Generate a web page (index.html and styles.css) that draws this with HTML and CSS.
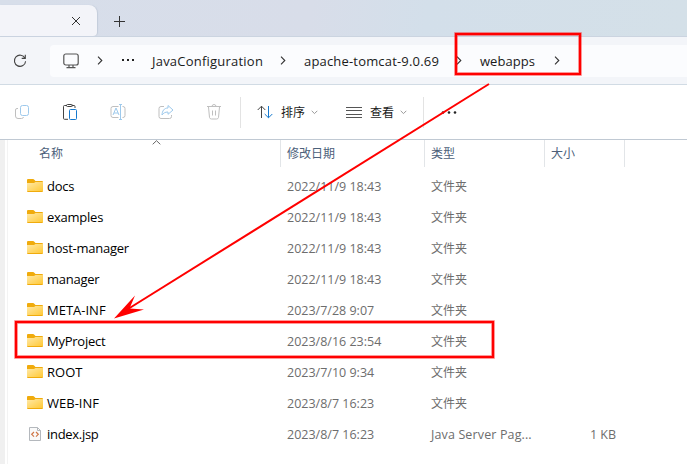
FILE: index.html
```html
<!DOCTYPE html>
<html lang="zh-CN">
<head>
<meta charset="utf-8">
<title>webapps</title>
<link rel="stylesheet" href="styles.css">
</head>
<body>
<div class="window">
  <header class="tabs">
    <div class="tab"><svg class="close" width="10" height="10" viewBox="0 0 10 10"><path d="M1 1l8 8M9 1L1 9"/></svg></div>
    <svg class="plus" width="11" height="11" viewBox="0 0 11 11"><path d="M5.5 0v11M0 5.5h11"/></svg>
  </header>
  <nav class="nav">
    <svg class="refresh" width="14" height="14" viewBox="0 0 14 14"><path d="M12 4.2A5.6 5.6 0 1 0 12.6 7.2M12.3.8v3.6H8.7"/></svg>
    <div class="address">
      <svg class="pc" width="16" height="16" viewBox="0 0 16 16"><rect x=".8" y="1" width="14.4" height="11" rx="2"/><path d="M6 12v2.6M10 12v2.6M3.5 14.6h9"/></svg>
      <svg class="chev c1" width="6" height="9" viewBox="0 0 6 9"><path d="M1 .7l3.8 3.8L1 8.3"/></svg>
      <svg class="dots" width="12" height="2" viewBox="0 0 12 2"><path d="M0 0h2v2H0zM5 0h2v2H5zM10 0h2v2h-2z"/></svg>
      <span class="crumb java">JavaConfiguration</span>
      <svg class="chev c2" width="6" height="9" viewBox="0 0 6 9"><path d="M1 .7l3.8 3.8L1 8.3"/></svg>
      <span class="crumb tomcat">apache-tomcat-9.0.69</span>
      <svg class="chev c3" width="6" height="9" viewBox="0 0 6 9"><path d="M1 .7l3.8 3.8L1 8.3"/></svg>
      <span class="crumb web">webapps</span>
      <svg class="chev c4" width="6" height="9" viewBox="0 0 6 9"><path d="M1 .7l3.8 3.8L1 8.3"/></svg>
    </div>
  </nav>
  <div class="toolbar">
    <svg class="tool" width="16" height="18" viewBox="0 0 16 18"><rect class="pale" x="6.500" y="2.500" width="8" height="10" rx="2"/><path class="gray" d="M4 5.500H3a1.500 1.500 0 0 0-1.500 1.500v6a2.500 2.500 0 0 0 2.500 2.500h3.500a2 2 0 0 0 2-1.500"/></svg>
    <svg class="tool" width="16" height="18" viewBox="0 0 16 18"><path class="dark" d="M5 2.500H2.500a1 1 0 0 0-1 1v11.800a1 1 0 0 0 1 1H6M9.500 2.500H12a1 1 0 0 1 1 1V5"/><rect class="dark" x="4.500" y="1.500" width="6" height="2" rx="1"/><rect class="blue" x="7.500" y="6.500" width="7" height="10" rx="1"/></svg>
    <svg class="tool" width="16" height="18" viewBox="0 0 16 18"><path class="gray" d="M8.500 3.500H3a2 2 0 0 0-2 2v7a2 2 0 0 0 2 2h5.500M12.500 3.500h.5a2 2 0 0 1 2 2v7a2 2 0 0 1-2 2h-.5"/><path class="pale" d="M3 12l3-7 3 7M4 10h4M10.500 1.500v15M9 1.500h3M9 16.500h3"/></svg>
    <svg class="tool" width="16" height="18" viewBox="0 0 16 18"><path class="gray" d="M6 3.500H3a2 2 0 0 0-2 2v8a2 2 0 0 0 2 2h8.500a2 2 0 0 0 2-2V12"/><path class="pale" d="M10 2.500l5 4.500-5 4.300V9c-3 0-4.500 1-6 3 .2-4 2-7 6-7z"/></svg>
    <svg class="tool" width="16" height="18" viewBox="0 0 16 18"><path class="gray" d="M1 3.500h14M6 3.500a2 2 0 0 1 4 0M2.500 4l1 10.500a2 2 0 0 0 2 1.500h5a2 2 0 0 0 2-1.500l1-10.500M6.500 7.500v5M9.500 7.500v5"/></svg>
    <i class="divider d1"></i>
    <svg class="sort" width="16" height="14" viewBox="0 0 16 14"><path class="dark" d="M4.500 13V1.300M.7 5l3.800-3.800L8.300 5"/><path class="blue" d="M11.500 1v11.700M7.700 9l3.800 3.800L15.300 9"/></svg>
    <span class="label">排序</span>
    <svg class="down" width="7" height="5" viewBox="0 0 7 5"><path d="M.7.800l2.800 2.800L6.300.800"/></svg>
    <svg class="view" width="16" height="11" viewBox="0 0 16 11"><path d="M0 .5h16M0 3.500h16M0 7.500h16M0 10.500h16"/></svg>
    <span class="label">查看</span>
    <svg class="down" width="7" height="5" viewBox="0 0 7 5"><path d="M.7.800l2.800 2.800L6.300.800"/></svg>
    <i class="divider d2"></i>
    <svg class="more" width="16" height="3" viewBox="0 0 16 3"><circle cx="2" cy="1.500" r="1.300"/><circle cx="8" cy="1.500" r="1.300"/><circle cx="14" cy="1.500" r="1.300"/></svg>
  </div>
  <main class="content">
    <div class="gutter"></div>
    <div class="list">
      <div class="head">
        <div class="h name">名称<svg class="up" width="9" height="5" viewBox="0 0 9 5"><path d="M.7 4.300L4.500.700l3.800 3.600"/></svg></div>
        <div class="h">修改日期</div><div class="h">类型</div><div class="h">大小</div>
      </div>
      <svg class="defs" width="0" height="0"><defs>
        <linearGradient id="g" x1="0" y1="0" x2="1" y2="1"><stop offset="0" stop-color="#ffe9a8"/><stop offset="1" stop-color="#ffc937"/></linearGradient>
        <symbol id="folder" viewBox="0 0 16 13"><path style="fill:#f0ab0c" d="M0 1Q0 0 1 0h5q.8 0 1.300.7L8.500 2H15q1 0 1 1v9q0 1-1 1H1q-1 0-1-1z"/><path style="fill:url(#g)" d="M0 4h7l1.500-1H16v8.500q0 .5-.5.500H.5q-.5 0-.5-.5z"/></symbol>
      </defs></svg>
      <div class="row"><svg class="icon"><use href="#folder"/></svg><span class="n">docs</span><span>2022/11/9 18:43</span><span>文件夹</span></div>
      <div class="row"><svg class="icon"><use href="#folder"/></svg><span class="n">examples</span><span>2022/11/9 18:43</span><span>文件夹</span></div>
      <div class="row"><svg class="icon"><use href="#folder"/></svg><span class="n">host-manager</span><span>2022/11/9 18:43</span><span>文件夹</span></div>
      <div class="row"><svg class="icon"><use href="#folder"/></svg><span class="n">manager</span><span>2022/11/9 18:43</span><span>文件夹</span></div>
      <div class="row"><svg class="icon"><use href="#folder"/></svg><span class="n caps">META-INF</span><span>2023/7/28 9:07</span><span>文件夹</span></div>
      <div class="row"><svg class="icon"><use href="#folder"/></svg><span class="n">MyProject</span><span>2023/8/16 23:54</span><span>文件夹</span></div>
      <div class="row"><svg class="icon"><use href="#folder"/></svg><span class="n caps">ROOT</span><span>2023/7/10 9:34</span><span>文件夹</span></div>
      <div class="row"><svg class="icon"><use href="#folder"/></svg><span class="n caps">WEB-INF</span><span>2023/8/7 16:23</span><span>文件夹</span></div>
      <div class="row"><svg class="file" width="12" height="14" viewBox="0 0 12 14"><path class="sheet" d="M.5.5h8l3 3v10H.5zM8.500.5v3h3"/><path class="code" d="M5 5L2.700 7.300 5 9.600M7 5l2.300 2.300L7 9.600"/></svg><span class="n jspname">index.jsp</span><span>2023/8/7 16:23</span><span class="jsp">Java Server Pag...</span><span class="size">1 KB</span></div>
    </div>
  </main>
  <svg class="marks" width="687" height="464" viewBox="0 0 687 464">
    <g class="glow"><rect x="456" y="34" width="124" height="40"/><rect x="16" y="322" width="477" height="35"/></g>
    <g class="line"><rect x="456" y="34" width="124" height="40"/><rect x="16" y="322" width="477" height="35"/><path d="M489 84L128 309"/></g>
    <path class="tip" d="M114 318.500L135 295.500l-5.500 13L144 309.500z"/>
  </svg>
</div>
</body>
</html>
```
FILE: styles.css
```css
* { box-sizing: border-box; }
body { margin: 0; font: 13px/20px "Open Sans", "Noto Sans CJK SC", sans-serif; color: #000; }
svg { display: block; flex: none; }
svg path, svg rect { fill: none; }
.window { position: relative; width: 687px; height: 464px; overflow: hidden; background: #fff; }
.tabs { height: 37px; display: flex; align-items: flex-start; border-bottom: 1px solid #cbd4e0; background: linear-gradient(100deg, #d7deea 0%, #d8dde9 45%, #d3dfea 62%, #d4e0e8 100%); }
.tab { width: 97px; height: 31px; margin-top: 5px; border-radius: 0 8px 4px 0; background: #f3f4f9; display: flex; align-items: center; box-shadow: 1px 0 1px #c4cddb; padding-left: 71px; }
.close { stroke: #333; }
.plus { stroke: #333; margin: 16px 0 0 17px; }
.nav { height: 48px; display: flex; align-items: center; background: #f3f5f9; border-bottom: 1px solid #d1dbe4; padding-left: 13px; }
.refresh { stroke: #444; stroke-width: 1.1; }
.address { flex: 1; margin-left: 23px; height: 32px; border-radius: 4px 0 0 4px; background: #fbfcfe; display: flex; align-items: center; padding-left: 13px; }
.pc { stroke: #555; stroke-width: 1.2; }
.chev { stroke: #333; stroke-width: 1.1; }
.c1 { margin-left: 18px; }
.dots { margin-left: 19px; margin-bottom: 2px; }
.dots path, .more circle { fill: #222; }
.crumb { color: #1a1a1a; white-space: nowrap; margin-top: 1px; }
.java { width: 111px; margin-left: 18px; letter-spacing: .22px; }
.c2 { margin-left: 17px; }
.tomcat { width: 136px; margin-left: 18px; letter-spacing: .18px; }
.c3 { margin-left: 16px; }
.web { width: 56px; margin-left: 18px; letter-spacing: .05px; }
.c4 { margin-left: 18px; }
.toolbar { height: 55px; border-bottom: 1px solid #c0c9d3; display: flex; align-items: center; padding-left: 14px; }
.tool { margin-right: 32px; }
.gray { stroke: #bfbfbf; }
.pale { stroke: #9dc9ec; }
.dark { stroke: #444; }
.blue { stroke: #1679ce; }
.divider { width: 1px; height: 31px; background: #e3e3e3; }
.d1 { margin-left: -14px; }
.sort { margin-left: 16px; }
.label { width: 24px; margin: 1px 0 0 8px; font-size: 12px; color: #1a1a1a; }
.down { margin-left: 6px; stroke: #999; }
.view { margin-left: 28px; stroke: #555; }
.d2 { margin-left: 16px; }
.more { margin-left: 17px; }
.content { display: flex; height: 324px; }
.gutter { width: 8px; background: linear-gradient(90deg, #f0f0f0 5px, #fff 5px 7px, #f3f3f3 7px); }
.list { flex: 1; }
.head { display: grid; grid-template-columns: 273px 144px 120px 80px; height: 27px; margin-bottom: 4px; color: #4c607a; font-size: 12px; }
.h { position: relative; border-right: 1px solid #e2e5e8; padding: 4px 0 0 6px; line-height: 19px; }
.name { padding-left: 31px; }
.up { position: absolute; left: 144px; top: 0; stroke: #666; }
.defs { position: absolute; }
.row { height: 31px; display: grid; grid-template-columns: 39px 240px 144px 111px 74px; align-items: center; color: #6d6d6d; white-space: nowrap; font-size: 12.5px; }
.icon { width: 16px; height: 13px; margin: 0 0 3px 19px; }
.file { margin: 0 0 2px 21px; }
svg .sheet { fill: #fafafa; stroke: #b4b8bd; }
.code { stroke: #cf7748; stroke-width: 1.2; }
.row span:nth-of-type(3) { font-size: 12px; margin-top: 1px; }
.row .n { color: #000; font-size: 13px; letter-spacing: -.25px; margin-top: -1px; }
.row .caps { letter-spacing: 0; }
.row .jspname { letter-spacing: -.3px; }
.row .jsp:nth-of-type(3) { font-size: 12.5px; letter-spacing: .13px; }
.size { text-align: right; }
.marks { position: absolute; inset: 0; }
.line { stroke: #f00; stroke-width: 2; }
.glow { stroke: #f008; stroke-width: 3.500; }
.marks .tip { fill: #f00; }
```
